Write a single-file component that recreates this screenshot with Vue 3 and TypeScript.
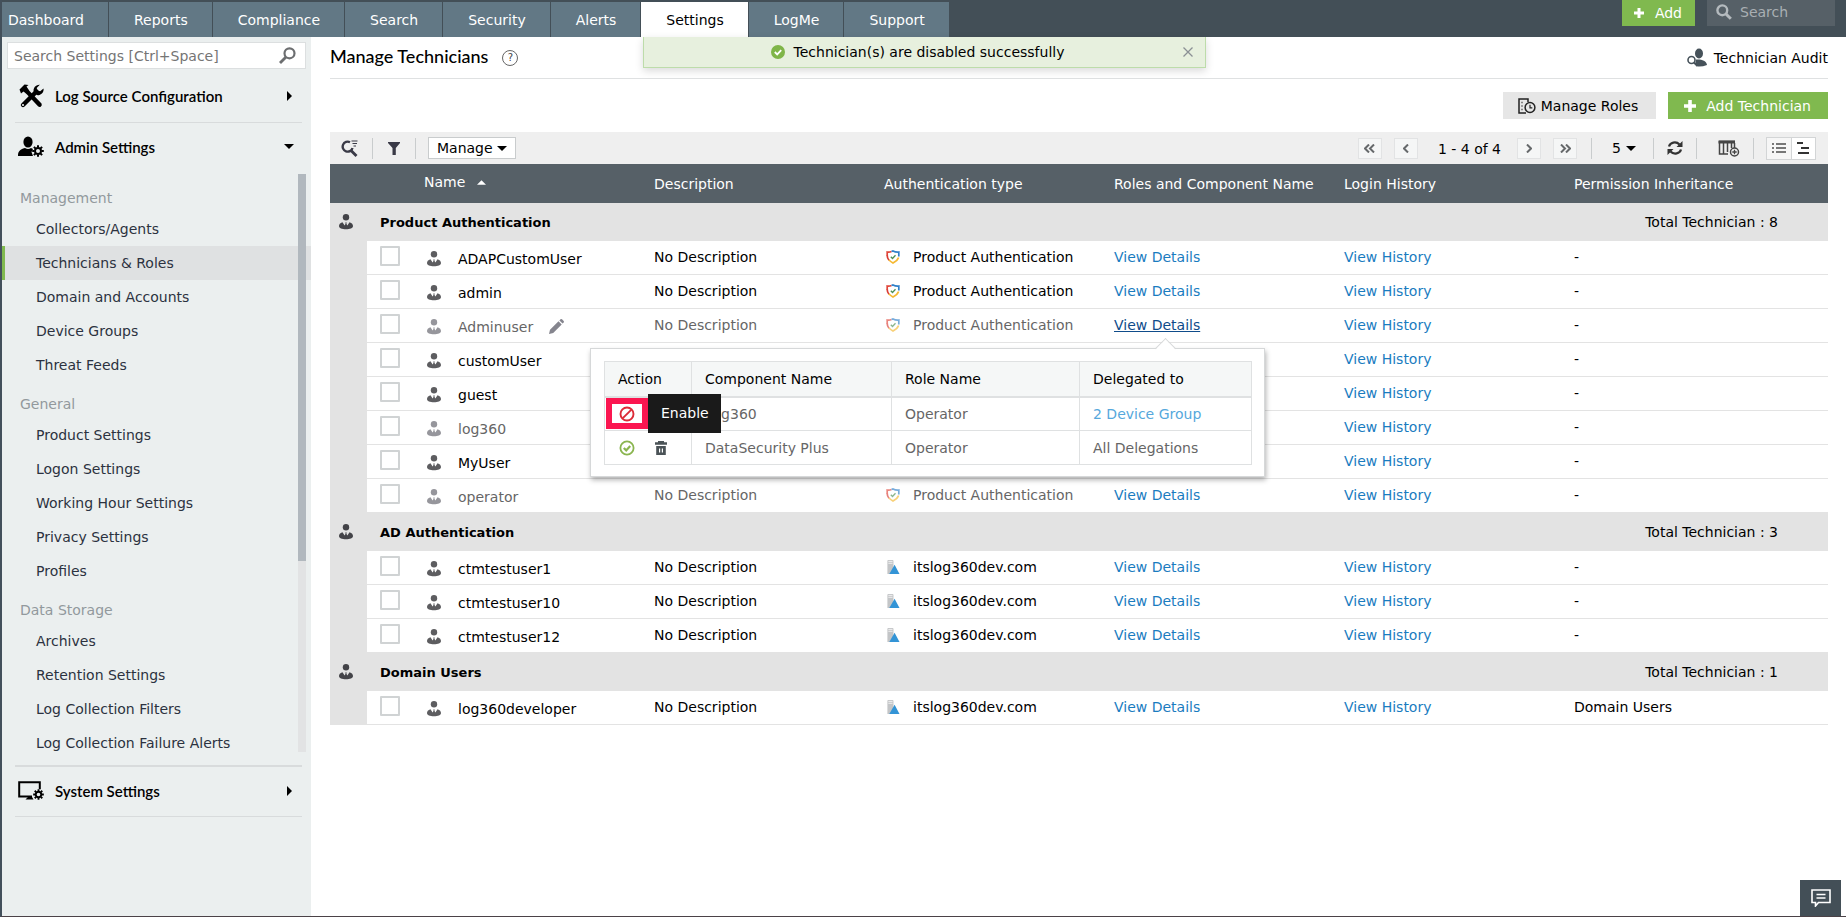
<script setup lang="ts">
import { ref } from 'vue'

interface Technician {
  name: string
  auth: string
  muted?: boolean
  open?: boolean
  permission?: string
}
interface Group {
  title: string
  total: number
  icon: string
  rows: Technician[]
}

const tabs = ['Dashboard', 'Reports', 'Compliance', 'Search', 'Security', 'Alerts', 'Settings', 'LogMe', 'Support']
const activeTab = 'Settings'

const menu = [
  { title: 'Management', items: ['Collectors/Agents', 'Technicians & Roles', 'Domain and Accounts', 'Device Groups', 'Threat Feeds'] },
  { title: 'General', items: ['Product Settings', 'Logon Settings', 'Working Hour Settings', 'Privacy Settings', 'Profiles'] },
  { title: 'Data Storage', items: ['Archives', 'Retention Settings', 'Log Collection Filters', 'Log Collection Failure Alerts'] },
]
const activeItem = 'Technicians & Roles'

const product = 'Product Authentication'
const domain = 'itslog360dev.com'
const groups: Group[] = [
  {
    title: 'Product Authentication', total: 8, icon: 'shield',
    rows: [
      { name: 'ADAPCustomUser', auth: product },
      { name: 'admin', auth: product },
      { name: 'Adminuser', auth: product, muted: true, open: true },
      { name: 'customUser', auth: product },
      { name: 'guest', auth: product },
      { name: 'log360', auth: product, muted: true },
      { name: 'MyUser', auth: product },
      { name: 'operator', auth: product, muted: true },
    ],
  },
  {
    title: 'AD Authentication', total: 3, icon: 'domain',
    rows: [
      { name: 'ctmtestuser1', auth: domain },
      { name: 'ctmtestuser10', auth: domain },
      { name: 'ctmtestuser12', auth: domain },
    ],
  },
  {
    title: 'Domain Users', total: 1, icon: 'domain',
    rows: [{ name: 'log360developer', auth: domain, permission: 'Domain Users' }],
  },
]

const selected = ref<string[]>([])
const toastVisible = ref(true)
const pageSize = ref('5')
</script>

<template>
  <svg class="sprite" aria-hidden="true">
    <symbol id="user" viewBox="0 0 14 16">
      <circle cx="7" cy="3.200" r="3.200" />
      <path d="M3.500 8.200 5.600 11.500 6.600 9.800 6.200 8.500h1.600l-.4 1.300 1 1.700 2.100-3.300C13 8.900 14 10.500 14 12c0 2.200-3 3.300-7 3.300S0 14.200 0 12c0-1.500 1-3.100 3.500-3.800z" />
    </symbol>
    <symbol id="shield" viewBox="0 0 14 14">
      <g fill="none" stroke-width="1.700">
        <path d="M5.500 1.500Q3.500 2.300 1.200 2v4" stroke="#e0463a" />
        <path d="M1.200 5.500c0 2 .6 3.300 1.800 4.700" stroke="#d93b33" />
        <path d="M3 10c1.100 1.200 2.400 2.100 4 3 2.600-1.400 4.900-3.200 5.600-5.500" stroke="#f5b932" />
        <path d="M5.500 1.500 7 .9c1.700.9 3.600 1.300 5.800 1.100v4.500" stroke="#2f80c9" />
      </g>
      <path d="m4.800 6.800 1.700 1.700 3-3.200" fill="none" stroke="#4d8f52" stroke-width="1.300" />
    </symbol>
    <symbol id="domain" viewBox="0 0 14 15">
      <path d="M1 1q0-1 1-1h4.500q1 0 1 1v14H1z" fill="#c3c5c7" />
      <path d="M2 1.500h4.500M2 3.500h4.500" stroke="#f2f2f2" stroke-width="1" />
      <path d="M8.700 5 3 15h11z" fill="#3394d6" />
    </symbol>
    <symbol id="caret" viewBox="0 0 10 5"><path d="M0 0h10L5 5z" /></symbol>
    <symbol id="plus" viewBox="0 0 12 12"><path d="M4.200 0h3.600v4.200H12v3.600H7.800V12H4.200V7.800H0V4.200h4.200z" /></symbol>
    <symbol id="gear" viewBox="-6 -6 12 12">
      <circle r="3" fill="none" stroke="currentColor" stroke-width="2" />
      <path d="M0-5.800v2M0 3.800v2M-5.800 0h2M3.800 0h2M-4.100-4.100l1.400 1.400M2.700 2.700l1.400 1.400M-4.100 4.100l1.400-1.400M2.700-2.700l1.400-1.400" stroke="currentColor" stroke-width="2" />
    </symbol>
    <symbol id="trash" viewBox="0 0 12 14">
      <path d="M3 0h6v1.200h3v2.600H0V1.200h3zM1.200 5h9.600v9H1.200z" />
      <path d="M4.600 7.500v4M7.400 7.500v4" stroke="#fff" stroke-width="1.200" />
    </symbol>
  </svg>

  <div class="app">
    <header class="topbar">
      <nav class="tabs" aria-label="Main">
        <a v-for="tab in tabs" :key="tab" href="#" class="tab" :class="{ active: tab === activeTab }">{{ tab }}</a>
      </nav>
      <div class="top-actions">
        <button type="button" class="add"><svg class="plus"><use href="#plus" /></svg>Add</button>
        <label class="global-search">
          <svg viewBox="0 0 16 16"><circle cx="6.300" cy="6.300" r="4.900" fill="none" stroke="#b4babe" stroke-width="2.400" /><path d="m10 10 4.800 4.800" stroke="#b4babe" stroke-width="3" /></svg>
          <input type="text" placeholder="Search" aria-label="Search" />
        </label>
      </div>
    </header>

    <div class="body">
      <aside class="sidebar">
        <label class="side-search">
          <input type="text" placeholder="Search Settings [Ctrl+Space]" aria-label="Search settings" />
          <svg viewBox="0 0 17 17"><circle cx="10.500" cy="6.300" r="5" fill="none" stroke="#6c6e70" stroke-width="2.200" /><path d="m7 10-6 6" stroke="#6c6e70" stroke-width="2.800" /></svg>
        </label>

        <button type="button" class="section">
          <svg class="section-icon" viewBox="0 0 26 26">
            <path d="M5 22 18.500 8.500" stroke="#000" stroke-width="4.400" stroke-linecap="round" />
            <path d="M21.800 1.800a5.600 5.600 0 0 0-6 7.200l3 3a5.600 5.600 0 0 0 6.700-6.500l-3.300 2.700-2.700-.6-.8-2.700z" />
            <circle cx="5" cy="22" r="1.100" fill="#ebefef" />
            <path d="m1.500 6.500 5-5 4 .5-2 1.500 3 4.500 12 12.500q1 2-.8 3.300-1.500.7-2.700-.5L8.500 11 5.500 8.500 3 10.500z" />
          </svg>
          <span>Log Source Configuration</span>
          <svg class="arrow-right" viewBox="0 0 5 10"><path d="M0 0v10l5-5z" /></svg>
        </button>
        <button type="button" class="section open" aria-expanded="true">
          <svg class="section-icon" viewBox="0 0 26 26">
            <ellipse cx="10" cy="8" rx="4.600" ry="5.500" />
            <path d="M0 22c0-4.500 1.500-6.500 7-8q3 2 6 0l2 1-1.500 3 1.500 4z" />
            <svg x="14" y="11" width="12" height="12"><use href="#gear" /></svg>
          </svg>
          <span>Admin Settings</span>
          <svg class="arrow-down"><use href="#caret" /></svg>
        </button>

        <div class="menu">
          <nav class="menu-list" aria-label="Admin settings">
            <section v-for="group in menu" :key="group.title" class="menu-group">
              <h3>{{ group.title }}</h3>
              <a v-for="item in group.items" :key="item" href="#" :class="{ current: item === activeItem }">{{ item }}</a>
            </section>
          </nav>
          <div class="scroll"><div class="thumb"></div></div>
        </div>

        <button type="button" class="section system">
          <svg class="section-icon" viewBox="0 0 26 26">
            <path d="M14 18.500H1.200V4.200h20.600v7" fill="none" stroke="#000" stroke-width="2" />
            <path d="M10 19h4l1.500 2.500h-8z" />
            <svg x="15" y="11" width="11" height="11"><use href="#gear" /></svg>
          </svg>
          <span>System Settings</span>
          <svg class="arrow-right" viewBox="0 0 5 10"><path d="M0 0v10l5-5z" /></svg>
        </button>
      </aside>

      <main class="main">
        <div v-if="toastVisible" class="toast" role="status">
          <svg class="toast-check" viewBox="0 0 14 14"><circle cx="7" cy="7" r="7" fill="#7fb548" /><path d="m3.800 7 2.400 2.400 4-4.200" fill="none" stroke="#fff" stroke-width="1.800" /></svg>
          <span>Technician(s) are disabled successfully</span>
          <button type="button" aria-label="Close" @click="toastVisible = false">
            <svg viewBox="0 0 10 10"><path d="m.5.5 9 9m0-9-9 9" stroke="#8b9094" stroke-width="1.300" /></svg>
          </button>
        </div>

        <div class="title-row">
          <h1>Manage Technicians</h1>
          <button type="button" class="help" aria-label="Help">?</button>
          <a href="#" class="audit">
            <svg viewBox="0 0 20 20">
              <g fill="#46525a"><ellipse cx="12" cy="5.500" rx="4" ry="5" /><path d="M9 11.500c5-.5 10.500 1 11 5.500q-5 2-9.500 1.500L8.500 15z" /></g>
              <circle cx="4.500" cy="12" r="3.500" fill="#fff" stroke="#46525a" stroke-width="1.600" /><path d="m7 14.500 3.500 3.500" stroke="#46525a" stroke-width="2" />
            </svg>
            Technician Audit
          </a>
        </div>

        <div class="action-row">
          <button type="button" class="roles">
            <svg viewBox="0 0 18 16"><path d="M8 15H1V1h9v3M3.500 4.500h1M3.500 8h1M3.500 11.500h1" fill="none" stroke="#222" stroke-width="1.500" /><circle cx="12" cy="9.500" r="4.900" fill="#e6e6e6" stroke="#222" stroke-width="1.500" /><path d="M12 6.800v3h2.300" fill="none" stroke="#222" stroke-width="1.200" /></svg>
            Manage Roles
          </button>
          <button type="button" class="add-tech"><svg class="plus"><use href="#plus" /></svg>Add Technician</button>
        </div>

        <div class="toolbar">
          <button type="button" class="tool find" aria-label="Search table">
            <svg width="17" height="17" viewBox="0 0 17 17" fill="none" stroke="#3a3a47"><path d="M9 2.200A5 5 0 1 0 11.500 8" stroke-width="2.400" /><path d="m9.500 10 6 6" stroke-width="2.800" /><path d="M10.500 1h6M11.500 3.500h4.500M12.500 6h2.500" stroke-width="1.200" /></svg>
          </button>
          <span class="sep"></span>
          <button type="button" class="tool" aria-label="Filter">
            <svg width="12" height="13" viewBox="0 0 12 13" fill="#3a3a47"><path d="M0 0h12v1L7.800 6v7H4.500V6L0 1z" /></svg>
          </button>
          <span class="sep"></span>
          <button type="button" class="manage" aria-haspopup="menu">Manage<svg class="down"><use href="#caret" /></svg></button>

          <div class="pager">
            <button type="button" class="page" aria-label="First page"><svg width="11" height="9" viewBox="0 0 11 9"><path d="M5 .5l-4 4 4 4M10 .5l-4 4 4 4" /></svg></button>
            <button type="button" class="page" aria-label="Previous page"><svg width="6" height="9" viewBox="0 0 6 9"><path d="M5 .5l-4 4 4 4" /></svg></button>
            <span class="range">1 - 4 of 4</span>
            <button type="button" class="page" aria-label="Next page"><svg width="6" height="9" viewBox="0 0 6 9"><path d="M1 .5l4 4-4 4" /></svg></button>
            <button type="button" class="page" aria-label="Last page"><svg width="11" height="9" viewBox="0 0 11 9"><path d="M1 .5l4 4-4 4M6 .5l4 4-4 4" /></svg></button>
          </div>
          <span class="sep"></span>
          <label class="size">
            <select v-model="pageSize" aria-label="Rows per page"><option>5</option><option>10</option><option>25</option></select>
            <svg class="down"><use href="#caret" /></svg>
          </label>
          <span class="sep"></span>
          <button type="button" class="tool" aria-label="Refresh">
            <svg width="16" height="16" viewBox="0 0 16 16"><path d="M2 6.500C3 2.500 9 .8 12.500 4.500M14 9.500c-1 4-7 5.700-10.500 2" fill="none" stroke="#333" stroke-width="2.200" /><path d="M15.500 1v6h-6zM.5 15V9h6z" fill="#333" /></svg>
          </button>
          <span class="sep"></span>
          <button type="button" class="tool columns" aria-label="Choose columns">
            <svg width="22" height="17" viewBox="0 0 22 17"><path d="M1 1.500h16M1.500 1v13h8.500M5.500 3v11M9.500 3v9M13.500 3v5M16.500 3v5" fill="none" stroke="#444" stroke-width="1.500" /><path d="M.5.5h16.500v3H.5z" fill="#444" /><circle cx="16.500" cy="12" r="4" fill="#efefef" stroke="#444" stroke-width="1.500" /><path d="M16.500 9.800v4.400M14.300 12h4.400" stroke="#444" stroke-width="1.300" /></svg>
          </button>
          <span class="sep"></span>
          <div class="views">
            <button type="button" aria-label="List view"><svg width="14" height="12" viewBox="0 0 14 12" stroke="#777" stroke-width="2"><path d="M0 2h2M4 2h10M0 6h2M4 6h10M0 10h2M4 10h10" /></svg></button>
            <button type="button" class="on" aria-label="Grouped view"><svg width="13" height="12" viewBox="0 0 13 12" stroke="#333" stroke-width="2"><path d="M0 1h6M4 6h8M1 11h11" /></svg></button>
          </div>
        </div>

        <table class="grid">
          <colgroup><col class="c-strip" /><col class="c-check" /><col /><col /><col /><col /><col /><col class="c-last" /></colgroup>
          <thead>
            <tr>
              <td colspan="2"></td>
              <th scope="col" class="name-head">Name<svg class="sort" viewBox="0 0 10 5"><path d="M0 5h10L5 0z" /></svg></th>
              <th scope="col">Description</th>
              <th scope="col">Authentication type</th>
              <th scope="col">Roles and Component Name</th>
              <th scope="col">Login History</th>
              <th scope="col">Permission Inheritance</th>
            </tr>
          </thead>
          <tbody v-for="group in groups" :key="group.title">
            <tr class="group">
              <td class="strip"><svg class="user dark"><use href="#user" /></svg></td>
              <th colspan="3" scope="rowgroup">{{ group.title }}</th>
              <td colspan="4" class="total">Total Technician : {{ group.total }}</td>
            </tr>
            <tr v-for="row in group.rows" :key="row.name" class="row" :class="{ muted: row.muted }">
              <td class="strip"></td>
              <td class="check"><input v-model="selected" type="checkbox" :value="row.name" :aria-label="'Select ' + row.name" /></td>
              <td class="name">
                <div>
                  <svg class="user"><use href="#user" /></svg><span>{{ row.name }}</span>
                  <button v-if="row.open" type="button" class="edit" aria-label="Edit">
                    <svg viewBox="0 0 15 15" fill="#85858e"><path d="M0 15l1-4.200L9.500 2.300l3.200 3.200L4.200 14zM10.400 1.400 11.500.3q.8-.6 1.500 0L14.700 2q.6.8 0 1.500l-1.100 1.100z" /></svg>
                  </button>
                </div>
              </td>
              <td>No Description</td>
              <td><div class="auth"><svg><use :href="'#' + group.icon" /></svg>{{ row.auth }}</div></td>
              <td>
                <div class="details">
                  <a href="#" :class="{ hovered: row.open }">View Details</a>
                  <div v-if="row.open" class="popup">
                    <table>
                      <colgroup><col class="p-action" /><col class="p-name" /><col class="p-role" /><col /></colgroup>
                      <thead>
                        <tr><th scope="col">Action</th><th scope="col">Component Name</th><th scope="col">Role Name</th><th scope="col">Delegated to</th></tr>
                      </thead>
                      <tbody>
                        <tr>
                          <td>
                            <div class="ops">
                              <button type="button" class="state" aria-label="Enable" aria-describedby="enable-tip">
                                <svg viewBox="0 0 16 16" fill="none" stroke="#dc2b37" stroke-width="1.900"><circle cx="8" cy="8" r="6.500" /><path d="m3.800 12.200 8.400-8.400" /></svg>
                              </button>
                              <button type="button" class="bin" aria-label="Delete"><svg><use href="#trash" /></svg></button>
                              <span class="focus-ring"></span>
                              <span id="enable-tip" class="tip" role="tooltip">Enable</span>
                            </div>
                          </td>
                          <td>Log360</td><td>Operator</td><td><a href="#">2 Device Group</a></td>
                        </tr>
                        <tr>
                          <td>
                            <div class="ops">
                              <button type="button" class="state" aria-label="Disable">
                                <svg viewBox="0 0 16 16" fill="none" stroke="#8ab54f" stroke-width="1.800"><circle cx="8" cy="8" r="6.600" /><path d="m4.800 8 2.400 2.400 4-4.400" stroke-width="2.200" /></svg>
                              </button>
                              <button type="button" class="bin" aria-label="Delete"><svg><use href="#trash" /></svg></button>
                            </div>
                          </td>
                          <td>DataSecurity Plus</td><td>Operator</td><td>All Delegations</td>
                        </tr>
                      </tbody>
                    </table>
                  </div>
                </div>
              </td>
              <td><a href="#">View History</a></td>
              <td class="permission">{{ row.permission ?? '-' }}</td>
            </tr>
          </tbody>
        </table>
      </main>
    </div>

    <button type="button" class="chat" aria-label="Feedback">
      <svg viewBox="0 0 20 18" fill="none" stroke="#fff"><path d="M1 1h18v12.500H7.500L4.500 17v-3.500H1z" stroke-width="1.600" /><path d="M5.500 5.500h9M5.500 9h9" stroke-width="1.400" /></svg>
    </button>
  </div>
</template>

<style>
body {
  margin: 0;
  background: #fff;
}
</style>

<style scoped>
.sprite { position: absolute; width: 0; height: 0; }
.app {
  position: relative;
  box-sizing: border-box;
  min-height: 100vh;
  display: flex;
  flex-direction: column;
  border-left: 2px solid #43505b;
  border-bottom: 1px solid #4b4247;
  font-family: "DejaVu Sans", Verdana, sans-serif;
  font-size: 14px;
  line-height: 18px;
  color: #000;
}
button, input, select {
  font: inherit;
  color: inherit;
  border: 0;
  padding: 0;
  margin: 0;
  background: none;
}
a { color: #1a7cbf; text-decoration: none; }
svg { flex: none; }

.topbar {
  display: flex;
  height: 37px;
  background: #434f57;
  justify-content: space-between;
}
.tabs { display: flex; gap: 1px; padding-top: 2px; }
.tab {
  display: flex;
  align-items: center;
  padding: 0 24px 0 25px;
  background: #627885;
  color: #fff;
}
.tab:first-child { padding-left: 6px; }
.tab.active { background: #fff; color: #000; }
.top-actions { display: flex; gap: 12px; height: 26px; padding-right: 11px; }
.add {
  display: flex;
  align-items: center;
  gap: 11px;
  padding: 0 13px 0 12px;
  background: #80b94f;
  color: #fff;
}
.plus { width: 12px; height: 12px; fill: #fff; }
.add .plus { width: 10px; height: 10px; }
.global-search {
  display: flex;
  align-items: center;
  gap: 8px;
  box-sizing: border-box;
  width: 128px;
  padding: 0 9px 2px;
  background: #566067;
}
.global-search svg { width: 16px; height: 16px; }
.global-search input { flex: 1; min-width: 0; color: #fff; }
.global-search input::placeholder { color: #a9afb3; opacity: 1; }

.body { flex: 1; display: flex; }
.sidebar {
  flex: none;
  width: 309px;
  background: #ebefef;
  display: flex;
  flex-direction: column;
}
.side-search {
  display: flex;
  align-items: center;
  box-sizing: border-box;
  height: 27px;
  margin: 5px 5px 0;
  padding: 0 9px 0 6px;
  background: #fff;
  border: 1px solid #dcdfe0;
}
.side-search input { flex: 1; min-width: 0; outline: 0; }
.side-search input::placeholder { color: #757575; opacity: 1; }
.side-search svg { width: 17px; height: 17px; }
.section {
  display: flex;
  align-items: center;
  height: 54px;
  margin: 0 9px 0 13px;
  padding: 0 10px 0 3px;
  border-bottom: 1px solid #d8dbdc;
  font-family: Lato, Carlito, sans-serif;
  font-size: 15px;
  font-weight: 600;
  text-align: left;
}
.section.open { height: 51px; padding-bottom: 4px; border-bottom: 0; }
.section span { flex: 1; }
.section-icon { width: 26px; height: 26px; margin-right: 11px; }
.arrow-right { width: 5px; height: 10px; }
.arrow-down { width: 10px; height: 5px; margin-right: -2px; }
.menu { display: flex; position: relative; height: 578px; }
.menu-list { flex: 1; padding-top: 2px; }
.menu-group { padding-top: 8px; }
.menu h3 {
  margin: 0;
  padding-left: 18px;
  font-size: 14px;
  font-weight: 400;
  line-height: 28px;
  color: #92999d;
}
.menu a {
  display: block;
  padding-left: 34px;
  line-height: 34px;
  color: #2c3240;
}
.menu a.current {
  padding-left: 31px;
  border-left: 3px solid #80b94f;
  background: #dfe1e2;
}
.scroll {
  position: absolute;
  top: 0;
  bottom: 0;
  right: 5px;
  width: 8px;
  background: #e2e3e4;
}
.thumb { height: 67%; background: #b1b8be; }
.section.system {
  height: 52px;
  margin-top: 13px;
  padding-bottom: 2px;
  border-top: 2px solid #d8dbdc;
}

.main {
  position: relative;
  flex: 1;
  min-width: 0;
  padding: 0 18px 0 19px;
}
.toast {
  position: absolute;
  top: 0;
  left: 332px;
  box-sizing: border-box;
  width: 563px;
  height: 31px;
  display: flex;
  align-items: center;
  justify-content: center;
  gap: 9px;
  padding: 0 14px 1px 0;
  background: #e7f0de;
  border: solid #bddcaa;
  border-width: 0 1px 1px;
  box-shadow: 0 3px 8px rgba(0, 0, 0, 0.15);
}
.toast-check { width: 14px; height: 14px; }
.toast button { position: absolute; right: 12px; display: flex; }
.toast button svg { width: 10px; height: 10px; }
.title-row {
  display: flex;
  align-items: center;
  height: 41px;
  border-bottom: 1px solid #dfe1e2;
}
h1 {
  margin: 0;
  padding-bottom: 4px;
  font-family: Lato, Carlito, sans-serif;
  font-size: 18px;
  font-weight: 500;
}
.help {
  box-sizing: border-box;
  width: 16px;
  height: 16px;
  margin-left: 14px;
  border: 1px solid #666;
  border-radius: 50%;
  font-size: 10px;
  line-height: 14px;
  color: #444;
}
.audit { display: flex; align-items: center; gap: 7px; margin-left: auto; color: #000; }
.audit svg { width: 20px; height: 20px; }
.action-row {
  display: flex;
  justify-content: flex-end;
  gap: 12px;
  padding: 13px 0;
}
.action-row button { display: flex; align-items: center; height: 27px; }
.roles { gap: 5px; padding: 0 18px 0 15px; background: #e6e6e6; }
.roles svg { width: 18px; height: 16px; }
.add-tech { gap: 10px; padding: 0 17px 0 16px; background: #80b94f; color: #fff; }

.toolbar {
  display: flex;
  align-items: center;
  height: 32px;
  background: #efefef;
}
.sep { width: 1px; height: 21px; background: #c9cccd; }
.tool { display: flex; justify-content: center; width: 42px; }
.tool.find { padding-right: 4px; }
.tool.columns { width: 56px; padding-left: 8px; }
.manage {
  display: flex;
  align-items: center;
  gap: 4px;
  box-sizing: border-box;
  height: 22px;
  margin-left: 12px;
  padding: 0 8px;
  background: #fff;
  border: 1px solid #c9cccd;
}
.down { width: 10px; height: 5px; }
.pager { display: flex; align-items: center; gap: 12px; margin: 0 14px 0 auto; }
.page {
  box-sizing: border-box;
  display: flex;
  align-items: center;
  justify-content: center;
  width: 24px;
  height: 21px;
  background: #f5f6f6;
  border: 1px solid #e2e3e4;
}
.page path { fill: none; stroke: #66696b; stroke-width: 2; }
.range { padding: 2px 4px 0 8px; }
.size { position: relative; display: flex; align-items: center; width: 61px; }
.size select { width: 100%; padding: 0 20px; appearance: none; }
.size .down { position: absolute; right: 17px; pointer-events: none; }
.views {
  box-sizing: border-box;
  display: flex;
  width: 50px;
  height: 23px;
  margin: 0 12px;
  border: 1px solid #d3d5d6;
}
.views button { flex: 1; display: flex; align-items: center; justify-content: center; background: #f6f6f6; }
.views .on { background: #fff; border-left: 1px solid #d3d5d6; }

.grid { width: 100%; table-layout: fixed; border-spacing: 0; }
.c-strip { width: 37px; }
.c-check { width: 47px; }
.c-last { width: 264px; }
td, th { box-sizing: border-box; padding: 0 0 0 10px; text-align: left; font-weight: 400; }
.grid > thead tr { height: 39px; background: #566067; color: #fff; }
.grid .name-head { padding-bottom: 4px; }
.sort { width: 9px; height: 5px; margin: 0 0 2px 12px; fill: #fff; }
.group { height: 38px; background: #e3e3e3; }
.group th { padding: 2px 0 0 13px; font-size: 13px; font-weight: 700; }
.group .total { padding-right: 50px; text-align: right; }
.strip { padding-left: 9px; background: #e3e3e3; }
.strip svg { display: block; }
.user { width: 14px; height: 16px; fill: #5d5d60; }
.user.dark { fill: #434348; }
.row > td { height: 34px; padding-bottom: 1px; border-bottom: 1px solid #e3e3e3; }
.row > .check { padding: 0 0 3px 13px; }
.check input {
  display: block;
  width: 20px;
  height: 20px;
  appearance: none;
  background: #fff;
  border: 2px solid #d0d3d4;
  box-sizing: border-box;
  border-radius: 1px;
}
.check input:checked { background: #80b94f; }
.row > .name { padding-left: 13px; padding-bottom: 0; }
.name div { display: flex; align-items: center; padding-top: 2px; }
.name span { margin-left: 17px; }
.edit { display: flex; margin-left: 16px; }
.edit svg { width: 15px; height: 15px; }
.auth { display: flex; align-items: center; }
.auth svg { width: 14px; height: 14px; margin: 0 13px 0 2px; }
.muted { color: #666; }
.muted .permission { color: #000; }
.muted .user { fill: #96969c; }
.muted .auth svg { opacity: 0.65; }
.details { position: relative; }
a.hovered { color: #0f4c8a; text-decoration: underline; }

.popup {
  position: absolute;
  z-index: 2;
  top: 32px;
  left: -524px;
  box-sizing: border-box;
  width: 675px;
  padding: 12px 12px 11px 13px;
  background: #fff;
  border: 1px solid #d6d8d9;
  box-shadow: 1px 3px 5px rgba(0, 0, 0, 0.3);
}
.popup::before {
  content: "";
  position: absolute;
  top: -8px;
  left: 567px;
  width: 14px;
  height: 14px;
  background: linear-gradient(135deg, #fff 50%, transparent 50%);
  border: solid #d6d8d9;
  border-width: 1px 0 0 1px;
  transform: rotate(45deg);
}
.popup table { width: 100%; table-layout: fixed; border-collapse: collapse; }
.p-action { width: 87px; }
.p-name { width: 200px; }
.p-role { width: 188px; }
.popup th, .popup td { height: 34px; padding-left: 13px; border: 1px solid #dfe1e2; }
.popup thead th { height: 35px; padding-top: 1px; background: #f5f7f7; color: #000; border-bottom-width: 2px; }
.popup td a { color: #56a8dc; }
.ops { position: relative; display: flex; align-items: center; gap: 20px; height: 31px; }
.ops button { display: flex; }
.state { margin-left: 1px; }
.state svg { width: 16px; height: 16px; }
.bin svg { width: 12px; height: 14px; fill: #4b5357; }
.focus-ring {
  position: absolute;
  top: 0;
  left: -12px;
  box-sizing: border-box;
  width: 42px;
  height: 31px;
  border: 6px solid #fb1650;
  pointer-events: none;
}
.tip {
  position: absolute;
  top: -4px;
  left: 30px;
  padding: 10px 12px 11px 13px;
  background: #1a1a1a;
  color: #fff;
}
.chat {
  position: absolute;
  right: 5px;
  bottom: 0;
  display: flex;
  align-items: center;
  justify-content: center;
  width: 41px;
  height: 36px;
  background: #434f57;
}
.chat svg { width: 20px; height: 18px; }
</style>
